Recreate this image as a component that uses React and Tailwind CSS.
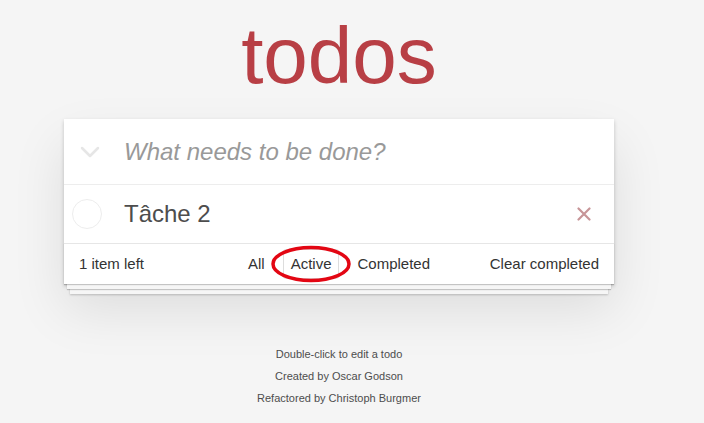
import React from "react";

const font = { fontFamily: '"Liberation Sans", Arial, sans-serif' };

function Chevron() {
  return (
    <svg width="20" height="12" viewBox="0 0 20 12" className="shrink-0">
      <path d="M2 2 L10 10 L18 2" fill="none" stroke="#e6e6e6" strokeWidth="2.5" strokeLinecap="round" strokeLinejoin="round" />
    </svg>
  );
}

function Cross() {
  return (
    <svg width="14" height="14" viewBox="0 0 14 14">
      <path d="M1.5 1.5 L12.5 12.5 M12.5 1.5 L1.5 12.5" stroke="#c79598" strokeWidth="2.2" strokeLinecap="round" />
    </svg>
  );
}

export default function App() {
  return (
    <div className="min-h-screen bg-[#f5f5f5] text-[#4d4d4d]" style={font}>
      <div className="w-[678px] flex flex-col items-center">
        {/* title */}
        <h1 className="mt-[16px] text-[80px] leading-none font-extralight text-[#b83f45]">todos</h1>

        {/* card */}
        <section className="mt-[23px] w-[550px] bg-white shadow-[0_2px_4px_rgba(0,0,0,0.2),0_25px_50px_rgba(0,0,0,0.1)]">
          <div className="h-[65px] flex items-center pl-[16px]">
            <Chevron />
            <span className="ml-[24px] text-[24px] italic text-[#999]">What needs to be done?</span>
          </div>

          <div className="h-[59px] border-t border-[#ededed] flex items-center pl-[8px] pr-[23px]">
            <div className="w-[30px] h-[30px] rounded-full border border-[#ededed] shrink-0"></div>
            <span className="ml-[22px] text-[24px] text-[#4d4d4d] flex-1">Tâche 2</span>
            <Cross />
          </div>

          {/* footer */}
          <div className="h-[41px] border-t border-[#e6e6e6] px-[15px] grid grid-cols-[1fr_auto_1fr] items-center text-[15px] text-[#333] shadow-[0_1px_1px_rgba(0,0,0,0.2),0_8px_0_-3px_#f6f6f6,0_9px_1px_-3px_rgba(0,0,0,0.2),0_16px_0_-6px_#f6f6f6,0_17px_2px_-6px_rgba(0,0,0,0.2)]">
            <span>1 item left</span>
            <div className="flex items-center">
              <a className="mx-[5px] px-[7px] py-[3px] border border-transparent rounded-[3px]">All</a>
              <a className="relative mx-[5px] px-[7px] py-[3px] border border-[#dddddd] rounded-[3px]">
                Active
                <svg width="84" height="40" viewBox="0 0 84 40" className="absolute left-1/2 top-1/2 -translate-x-1/2 -translate-y-1/2 pointer-events-none">
                  <ellipse cx="42" cy="20" rx="38" ry="16.5" fill="none" stroke="#e30613" strokeWidth="3.5" />
                </svg>
              </a>
              <a className="mx-[5px] px-[7px] py-[3px] border border-transparent rounded-[3px]">Completed</a>
            </div>
            <span className="justify-self-end">Clear completed</span>
          </div>
        </section>

        {/* info */}
        <footer className="mt-[59px] text-[11px] leading-[22px] text-[#4d4d4d] text-center">
          <p>Double-click to edit a todo</p>
          <p>Created by Oscar Godson</p>
          <p>Refactored by Christoph Burgmer</p>
        </footer>
      </div>
    </div>
  );
}
